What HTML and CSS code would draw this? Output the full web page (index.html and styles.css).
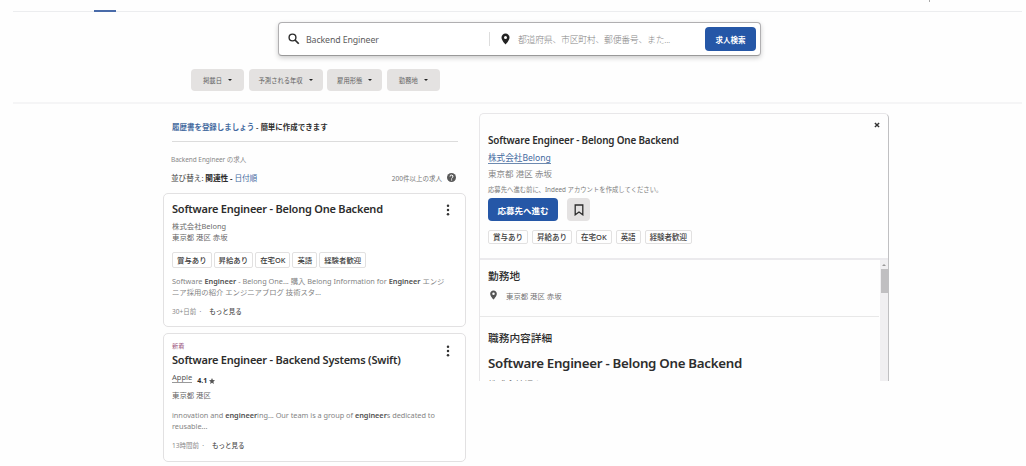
FILE: index.html
```
<!DOCTYPE html>
<html lang="ja">
<head>
<meta charset="utf-8">
<title>求人検索</title>
<link rel="stylesheet" href="styles.css">
</head>
<body>
<header class="topbar"><span class="tab-active"></span><span class="account-edge"></span></header>
<section class="search-area">
  <form class="search">
    <svg class="search-icon" viewBox="0 0 24 24"><circle cx="9" cy="9" r="6.8" fill="none" stroke="#2d2d2d" stroke-width="2.8"/><path d="M14 14l7.500 7.500" stroke="#2d2d2d" stroke-width="3.4"/></svg>
    <span class="what">Backend Engineer</span>
    <span class="split"></span>
    <svg class="pin" viewBox="0 0 24 24"><path fill="#222" fill-rule="evenodd" d="M12 1C7.500 1 4 4.500 4 9c0 6 8 14 8 14s8-8 8-14c0-4.500-3.500-8-8-8zm0 5a3 3 0 110 6 3 3 0 010-6z"/></svg>
    <span class="where">都道府県、市区町村、郵便番号、また...</span>
    <button class="find" type="button">求人検索</button>
  </form>
  <nav class="filters">
    <span class="filter f1"><span>掲載日</span><i></i></span>
    <span class="filter f2"><span>予測される年収</span><i></i></span>
    <span class="filter f3"><span>雇用形態</span><i></i></span>
    <span class="filter f4"><span>勤務地</span><i></i></span>
  </nav>
</section>
<main class="content">
  <section class="results">
    <div class="resume"><a>履歴書を登録しましょう</a> - 簡単に作成できます</div>
    <div class="query">Backend Engineer の求人</div>
    <div class="sort">
      <span class="order">並び替え: <b>関連性 -</b> <a>日付順</a></span>
      <span class="count">200件以上の求人</span>
      <svg class="help" viewBox="0 0 20 20"><circle cx="10" cy="10" r="10" fill="#595959"/><path d="M6.800 8a3.200 3.200 0 116 1.300c-.8 1.300-2.600 1.500-2.600 3.200" fill="none" stroke="#fff" stroke-width="2.2"/><circle cx="10.200" cy="15.300" r="1.400" fill="#fff"/></svg>
    </div>
    <article class="card first">
      <div class="card-head"><h2>Software Engineer - Belong One Backend</h2><svg class="dots" viewBox="0 0 4 12"><circle cx="2" cy="1.800" r="1.250"/><circle cx="2" cy="6" r="1.250"/><circle cx="2" cy="10.200" r="1.250"/></svg></div>
      <div class="company">株式会社Belong</div>
      <div class="place">東京都 港区 赤坂</div>
      <div class="tags"><span>賞与あり</span><span>昇給あり</span><span>在宅OK</span><span>英語</span><span>経験者歓迎</span></div>
      <p class="snippet s1"><span>Software <b>Engineer</b> - Belong One... 購入 Belong Information for <b>Engineer</b> エンジ</span><br>ニア採用の紹介 エンジニアブログ 技術スタ...</p>
      <div class="meta">30+日前 &nbsp;·<b>もっと見る</b></div>
    </article>
    <article class="card second">
      <div class="new">新着</div>
      <div class="card-head"><h2>Software Engineer - Backend Systems (Swift)</h2><svg class="dots" viewBox="0 0 4 12"><circle cx="2" cy="1.800" r="1.250"/><circle cx="2" cy="6" r="1.250"/><circle cx="2" cy="10.200" r="1.250"/></svg></div>
      <div class="rated"><span class="apple">Apple</span><b>4.1</b><svg class="star" viewBox="0 0 20 20"><path fill="#555" d="M10 0l3 7 7 .6-5.300 4.700L16.300 20 10 15.800 3.700 20l1.600-7.700L0 7.600 7 7z"/></svg></div>
      <div class="place">東京都 港区</div>
      <p class="snippet s2"><span>innovation and <b>engineer</b>ing... Our team is a group of <b>engineer</b>s dedicated to</span><br>reusable...</p>
      <div class="meta">13時間前 &nbsp;·<b>もっと見る</b></div>
    </article>
  </section>
  <section class="detail">
    <div class="detail-head">
      <svg class="close" viewBox="0 0 10 10"><path d="M1.500 1.500l7 7m0-7l-7 7" stroke="#333" stroke-width="2.400"/></svg>
      <h1>Software Engineer - Belong One Backend</h1>
      <a class="d-company">株式会社Belong</a>
      <div class="d-place">東京都 港区 赤坂</div>
      <div class="d-note">応募先へ進む前に、Indeed アカウントを作成してください。</div>
      <div class="actions"><button class="apply" type="button">応募先へ進む</button><button class="save" type="button"><svg viewBox="0 0 10 12"><path d="M1.200 1h7.600v9.800L5 8 1.200 10.800z" fill="none" stroke="#2d2d2d" stroke-width="1.300"/></svg></button></div>
      <div class="tags d-tags"><span>賞与あり</span><span>昇給あり</span><span>在宅OK</span><span>英語</span><span>経験者歓迎</span></div>
    </div>
    <div class="detail-body">
      <div class="scroll-content">
        <div class="location"><h3>勤務地</h3><div class="loc-line"><svg class="pin" viewBox="0 0 24 24"><path fill="#555" fill-rule="evenodd" d="M12 1C7.500 1 4 4.500 4 9c0 6 8 14 8 14s8-8 8-14c0-4.500-3.500-8-8-8zm0 5a3 3 0 110 6 3 3 0 010-6z"/></svg><span>東京都 港区 赤坂</span></div></div>
        <div class="description"><h3>職務内容詳細</h3><h2>Software Engineer - Belong One Backend</h2><p>株式会社紹介</p></div>
      </div>
      <div class="scrollbar"><i class="up"></i><i class="thumb"></i></div>
    </div>
  </section>
</main>
</body>
</html>
```
FILE: styles.css
```
* { box-sizing: border-box; }
body { margin: 0; width: 1026px; height: 466px; overflow: hidden; background: #fefefe; color: #2d2d2d; font-family: "Noto Sans", "Noto Sans CJK JP", sans-serif; font-size: 8px; }
h1, h2, h3, p { margin: 0; }
button { border: 0; padding: 0; font-family: inherit; }
svg { display: block; flex: none; }
span, a, b, div, h1, h2, h3 { white-space: nowrap; }
.topbar { height: 12px; margin: 0 4px 0 13px; border-bottom: 1px solid #ecedef; display: flex; justify-content: space-between; }
.tab-active { width: 22px; height: 2px; margin: 10px 0 0 81px; background: #496ba9; }
.account-edge { width: 1px; height: 2px; background: #aaa; margin-right: 92px; }
.search-area { height: 92px; margin: 0 4px 0 13px; border-bottom: 2px solid #f5f5f6; padding-top: 10px; }
.search { width: 483px; height: 34px; margin-left: 265px; border: 1px solid #b0afb1; border-bottom-color: #999; border-radius: 4px; background: #fff; box-shadow: 0 2px 5px #0003; display: flex; align-items: center; padding: 0 4px 0 9px; }
.search-icon { width: 12px; height: 12px; }
.what { width: 183px; margin-left: 6px; padding-top: 1px; font-size: 8.800px; letter-spacing: -.12px; color: #5c5c5c; }
.split { width: 1px; height: 14px; background: #ddd; margin-right: 9px; }
.search .pin { width: 13px; height: 12px; }
.where { flex: 1; margin-left: 6px; padding-top: 1px; font-size: 8.900px; font-weight: 300; letter-spacing: -.27px; color: #858585; }
.find { width: 51px; height: 24px; border-radius: 4px; background: #2557a7; color: #fff; font-size: 7.500px; font-weight: 700; }
.filters { display: flex; gap: 4.600px; margin: 13px 0 0 178px; }
.filter { height: 22px; border-radius: 4px; background: #e4e2e1; display: flex; align-items: center; justify-content: center; gap: 6px; font-size: 6.300px; color: #606060; }
.filter i { border: 2.500px solid transparent; border-top-color: #222; border-bottom: 0; }
.f1, .f4 { width: 53px; }
.f2 { width: 74px; }
.f3 { width: 55px; }
.content { display: flex; align-items: flex-start; padding: 9px 0 0 163px; gap: 13px; }
.results { width: 303px; }
.resume { height: 29px; margin: 0 8px 0 9px; padding-top: 7px; border-bottom: 1px solid #dcdcdc; line-height: 14px; font-size: 7.500px; font-weight: 600; letter-spacing: -.03px; }
.results a, .d-company { color: #446a9e; }
.query { margin: 11px 0 0 8px; height: 14px; line-height: 14px; font-size: 6.500px; letter-spacing: -.06px; color: #888; }
.sort { margin: 4px 10px 0 8px; height: 13px; display: flex; align-items: center; font-size: 7.700px; color: #444; }
.order { flex: 1; letter-spacing: -.08px; }
.order b { color: #292929; }
.count { font-size: 6.500px; color: #777; margin-right: 5px; }
.help { width: 9px; height: 9px; }
.card { border: 1px solid #e2e1e2; border-radius: 5px; background: #fff; padding: 0 15px 0 8px; }
.first { height: 134px; margin-top: 9px; }
.second { height: 129px; margin-top: 6px; }
.card-head { display: flex; justify-content: space-between; align-items: center; height: 16px; }
.first .card-head { margin-top: 7px; }
.card h2 { font-size: 11px; font-weight: 600; line-height: 16px; letter-spacing: -.22px; }
.dots { width: 4px; height: 12px; fill: #333; position: relative; top: 1px; }
.company { margin-top: 4px; height: 11px; line-height: 11px; font-size: 7.400px; color: #6a6a6a; }
.place { height: 10px; line-height: 10px; font-size: 7.400px; color: #666; }
.tags { display: flex; gap: 2px; margin-top: 10px; }
.tags span { height: 16px; padding: 0 4px; border: 1px solid #e2e1e1; border-radius: 2px; line-height: 14px; font-size: 7.400px; font-weight: 500; color: #3c3c3c; }
.snippet { margin-top: 8px; font-size: 7.350px; line-height: 10.500px; color: #848484; }
.snippet b { color: #505050; font-weight: 600; }
.s1 { letter-spacing: -.01px; }
.s2 { letter-spacing: -.03px; }
.meta { margin-top: 9px; height: 10px; line-height: 10px; font-size: 6.500px; color: #888; }
.meta b { margin-left: 8px; color: #505050; font-weight: 500; }
.first .meta { margin-top: 10px; }
.new { margin-top: 7px; height: 10px; line-height: 10px; font-size: 6.200px; color: #9a527c; }
.second .card-head { margin-top: 1px; }
.second .dots { top: -9px; }
.rated { display: flex; height: 13px; align-items: flex-start; margin-top: 5px; font-size: 7.500px; }
.apple { line-height: 9px; border-bottom: 1px solid #999; margin-right: 5px; color: #555; }
.rated b { line-height: 15px; font-size: 7px; }
.star { width: 6px; height: 6px; margin: 5px 0 0 2px; }
.second .place { margin-top: 4px; }
.second .snippet { margin-top: 10px; line-height: 11px; }
.detail { width: 410px; height: 268px; border: 1px solid #e8e7e9; border-right: 1px solid #c0c0c2; border-bottom: 0; border-radius: 5px 5px 0 0; overflow: hidden; background: #fefefe; }
.detail-head { height: 146px; padding: 0 8px; border-bottom: 2px solid #ebeaed; display: flex; flex-direction: column; align-items: flex-start; }
.close { width: 6px; height: 6px; align-self: flex-end; margin-top: 8px; }
h1 { margin-top: 4px; font-size: 9.900px; font-weight: 600; line-height: 16px; letter-spacing: -.16px; }
.d-company { margin-top: 5px; height: 11px; line-height: 10px; border-bottom: 1px solid #6d8ab0; font-size: 8.600px; }
.d-place { margin-top: 3px; height: 14px; line-height: 14px; font-size: 8.500px; color: #888; }
.d-note { margin-top: 3px; height: 11px; line-height: 11px; font-size: 6.350px; color: #7c7c7c; }
.actions { display: flex; gap: 9px; margin-top: 3px; }
.apply { width: 70px; height: 23px; border-radius: 4px; background: #2557a7; color: #fff; font-size: 8.500px; font-weight: 600; }
.save { width: 23px; height: 23px; border-radius: 4px; background: #e4e2e2; display: grid; place-items: center; }
.save svg { width: 10px; height: 12px; }
.d-tags { margin-top: 9px; gap: 4px; }
.d-tags span { height: 14px; line-height: 12px; font-size: 7.500px; }
.detail-body { display: flex; height: 121px; }
.scroll-content { width: 399px; overflow: hidden; }
.location { height: 57px; padding: 7px 0 0 8px; border-bottom: 1px solid #e8e8e8; }
h3 { font-size: 10.700px; line-height: 18px; font-weight: 500; }
.loc-line { display: flex; align-items: center; height: 14px; margin-top: 3px; gap: 7px; font-size: 7.400px; color: #747474; }
.loc-line .pin { width: 11px; height: 10px; }
.description { padding: 12px 0 0 8px; }
.description h2 { font-size: 13.300px; font-weight: 600; line-height: 20px; margin-top: 6px; letter-spacing: -.29px; }
.description p { font-size: 9px; line-height: 13px; margin-top: 5px; color: #777; }
.scrollbar { width: 8px; margin-left: 1px; background: #f0eff1; display: flex; flex-direction: column; align-items: center; }
.up { border: 2px solid transparent; border-bottom-color: #999; border-top: 0; margin-top: 4px; }
.thumb { width: 7px; height: 24px; margin-top: 3px; background: #c0bfc1; }
```
